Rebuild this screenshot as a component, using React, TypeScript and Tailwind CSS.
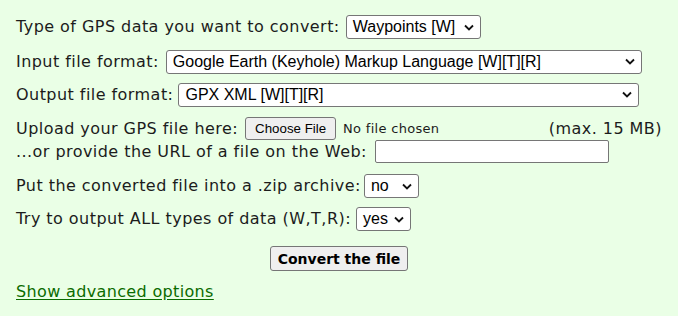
import React from "react";

function Chevron() {
  return (
    <svg width="10" height="7" viewBox="0 0 10 7" className="shrink-0">
      <path d="M1 1.5 L5 5.5 L9 1.5" fill="none" stroke="#111" strokeWidth="1.8" />
    </svg>
  );
}

function FakeSelect({ value, width, gap = "gap-[6px]" }: { value: string; width: string; gap?: string }) {
  return (
    <div
      className={`${width} h-[24px] bg-white border border-[#767676] rounded-[3px] flex items-center justify-between pl-[6px] pr-[6px] ${gap} text-[16px] text-black leading-none tracking-normal`}
      style={{ fontFamily: '"Liberation Sans", Arial, sans-serif' }}
    >
      <span className="whitespace-nowrap">{value}</span>
      <Chevron />
    </div>
  );
}

export default function App() {
  return (
    <div
      className="w-[678px] h-[316px] bg-[#eaffe6] text-[#1c1c1c] text-[16px] tracking-[0.45px] px-[16px] pt-[15px] overflow-hidden"
      style={{ fontFamily: '"DejaVu Sans", Verdana, sans-serif' }}
    >
      <div className="flex items-center gap-[6px] h-[24px]">
        <span>Type of GPS data you want to convert:</span>
        <FakeSelect value="Waypoints [W]" width="w-[135px]" />
      </div>

      <div className="flex items-center gap-[7px] h-[23px] mt-[11px]">
        <span>Input file format:</span>
        <FakeSelect value="Google Earth (Keyhole) Markup Language [W][T][R]" width="w-[476px]" />
      </div>

      <div className="flex items-center gap-[5px] h-[23px] mt-[10px]">
        <span>Output file format:</span>
        <FakeSelect value="GPX XML [W][T][R]" width="w-[461px]" />
      </div>

      <div className="flex items-center h-[23px] mt-[11px] w-[646px]">
        <span>Upload your GPS file here:</span>
        <button
          className="ml-[7px] h-[23px] px-[9px] bg-[#efefef] border border-[#767676] rounded-[3px] text-[13.3px] text-black leading-none tracking-normal"
          style={{ fontFamily: '"Liberation Sans", Arial, sans-serif' }}
        >
          Choose File
        </button>
        <span className="ml-[7px] text-[13px] tracking-[0.3px]">No file chosen</span>
        <span className="ml-auto">(max. 15 MB)</span>
      </div>

      <div className="flex items-center gap-[8px] h-[23px]">
        <span>...or provide the URL of a file on the Web:</span>
        <div className="w-[234px] h-[23px] bg-white border border-[#767676] rounded-[2px]" />
      </div>

      <div className="flex items-center gap-[3px] h-[24px] mt-[11px]">
        <span>Put the converted file into a .zip archive:</span>
        <FakeSelect value="no" width="w-[55px]" />
      </div>

      <div className="flex items-center gap-[5px] h-[24px] mt-[9px]">
        <span>Try to output ALL types of data (W,T,R):</span>
        <FakeSelect value="yes" width="w-[55px]" gap="gap-[3px]" />
      </div>

      <div className="flex justify-center mt-[15px] -mx-[16px]">
        <button className="h-[25px] px-[7px] bg-[#efefef] border border-[#767676] rounded-[3px] text-[14px] font-bold text-black leading-none tracking-normal">
          Convert the file
        </button>
      </div>

      <div className="mt-[9px]">
        <a href="#" className="text-[#0b6b00] underline underline-offset-[2px] tracking-[0.35px]">
          Show advanced options
        </a>
      </div>
    </div>
  );
}
